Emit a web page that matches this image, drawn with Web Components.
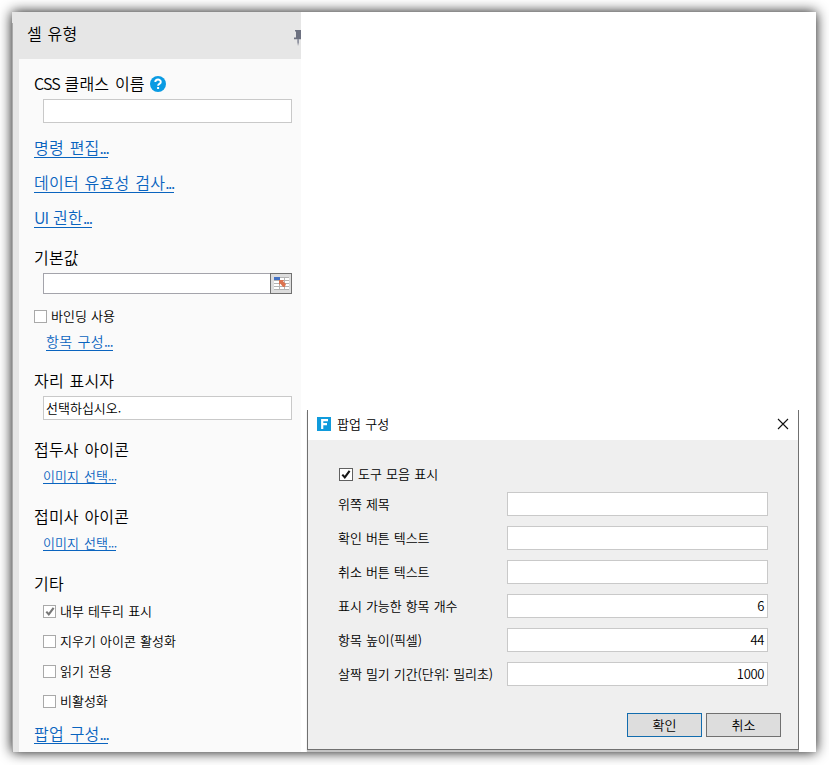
<!DOCTYPE html>
<html lang="ko">
<head>
<meta charset="utf-8">
<title>셀 유형</title>
<style>
html,body{margin:0;background:#fff}
body{font-family:"Noto Sans CJK KR","Liberation Sans",sans-serif;font-weight:350;color:#000;height:765px;overflow:hidden}
</style>
</head>
<body>
<cell-app></cell-app>
<script>
const define = (name, html, init) => customElements.define(name, class extends HTMLElement {
  connectedCallback() {
    if (this.shadowRoot) return;
    const t = document.createElement('template');
    t.innerHTML = html;
    this.attachShadow({mode: 'open'}).append(t.content.cloneNode(true));
    if (init) init(this, this.shadowRoot);
  }
});

define('section-label', `<style>
:host{display:flex;align-items:center;box-sizing:border-box;height:30px;padding:0 0 2px 15px;font-size:16px;line-height:20px;letter-spacing:.2px;word-spacing:1px;white-space:nowrap}
</style><slot></slot>`);

define('help-icon', `<style>:host{display:block;width:16px;height:16px;margin:2px 0 0 5px}svg{display:block}</style>
<svg width="16" height="16" viewBox="0 0 16 16"><circle cx="8" cy="8" r="8" fill="#0a9be3"/><path d="M5.3 6.1C5.3 2.7 10.8 2.8 10.8 5.9C10.8 8 8.1 7.7 8.1 9.7" fill="none" stroke="#fff" stroke-width="1.9"/><rect x="7.1" y="11" width="2" height="2" fill="#fff"/></svg>`);

define('action-link', `<style>
:host{display:flex;align-items:center;height:35px;padding-left:15px;font-size:16px;white-space:nowrap}
:host([size=medium]){height:25px;padding-left:27px;font-size:14px}
:host([size=small]){height:22px;padding-left:24px;font-size:13px}
a{display:block;box-sizing:border-box;height:20px;line-height:19px;border-bottom:1px solid #0a64bf;color:#0a64bf;letter-spacing:.24px;word-spacing:1px}
:host(:not([size])) a{margin-top:-2px}
:host([size=medium]) a{height:18px;line-height:17px;letter-spacing:.3px;margin-top:-2px}
:host([size=small]) a{height:16px;line-height:16px;letter-spacing:.1px}
:host([keep]) a{margin-top:0}
.dots{letter-spacing:-1.4px}
:host([size=medium]) .dots{letter-spacing:-.9px}
:host([size=small]) .dots{letter-spacing:-.7px}
</style><a><slot></slot><span class="dots">...</span></a>`);

define('text-box', `<style>
:host{display:flex;align-items:center;box-sizing:border-box;height:24px;background:#fff;border:1px solid #c9c9c9;padding:0 3px;font-size:13px;line-height:18px;white-space:nowrap}
:host([panel]){margin:0 9px 0 24px;padding-left:2px}
:host([number]){justify-content:flex-end;letter-spacing:-.35px}
</style><slot></slot>`);

define('formula-box', `<style>
:host{display:flex;height:21px;margin:0 9px 0 24px}
.field{flex:1;box-sizing:border-box;background:#fff;border:1px solid #a4a4ab;border-right:0}
.pick{box-sizing:border-box;width:22px;border:1px solid #707070;background:#ddd}
svg{display:block}
</style><div class="field"></div><div class="pick"><svg width="20" height="19" viewBox="0 0 20 19" shape-rendering="crispEdges">
<rect x="3" y="3" width="15" height="13" fill="#b4b4b4"/>
<path fill="#fff" d="M9 4h4v2H9zM14 4h4v2h-4zM3 7h5v2H3zM9 7h4v2H9zM14 7h4v2h-4zM3 10h5v2H3zM9 10h4v2H9zM14 10h4v2h-4zM3 13h5v2H3zM9 13h4v2H9zM14 13h4v2h-4z"/>
<rect x="3" y="3" width="6" height="3" fill="#4472c4"/>
<path d="M8 6h5l-1 1.3 3 2.7-1.3 3H12L9.3 9.5 8 11z" fill="#dc7350" shape-rendering="geometricPrecision"/></svg></div>`);

define('check-item', `<style>
:host{display:flex;align-items:center;height:30px;padding-left:24px;font-size:13px;line-height:18px;letter-spacing:-.02px;word-spacing:.6px;white-space:nowrap}
:host([outer]){height:27px;padding-left:15px}
:host([dialog]){padding-left:0;height:26px}
.box{box-sizing:border-box;width:13px;height:13px;border:1px solid #a9a9a9;background:#fff;margin-right:4px}
.text{margin-top:-1px}
:host([dialog]) .box{width:14px;border-color:#606060;margin-right:5px}
svg{display:none}
:host([checked]) svg{display:block}
path{fill:none;stroke:#777;stroke-width:2.1}
:host([dialog]) path{stroke:#161616}
</style><div class="box"><svg width="12" height="11" viewBox="0 0 12 11"><path d="M2.3 5.6L4.8 8.4L9.6 1.8"/></svg></div><span class="text"><slot></slot></span>`);

define('pin-icon', `<style>:host{display:block;width:7px;height:16px}svg{display:block}</style>
<svg width="7" height="16" viewBox="0 0 7 16"><path d="M1 0h6v1.5H1zM2 1h5v7H2zM0 7.5h7v1.8H0z" fill="#6d7180"/><path d="M3.2 9h1.8v3.5L4 16 3.2 12z" fill="#9093a0"/></svg>`);

define('side-panel', `<style>
:host{display:flex;flex-direction:column;width:289px;height:740px;background:#e6e6e6}
header{display:flex;align-items:center;justify-content:space-between;height:47px;box-sizing:border-box;padding:0 0 5px 15px;font-size:16px;line-height:20px;letter-spacing:.2px;word-spacing:1px}
pin-icon{margin-top:9px}
main{flex:1;box-sizing:border-box;margin-left:7px;padding-top:10px;background:#fafafa}
</style><header><slot name="title"></slot><pin-icon></pin-icon></header><main><slot></slot></main>`);

define('form-row', `<style>
:host{display:grid;grid-template-columns:169px 261px;align-items:center;height:24px;margin:0 0 10px -1px;font-size:13px;line-height:18px;white-space:nowrap}
span{letter-spacing:-.08px;word-spacing:.6px}
</style><span><slot></slot></span><text-box number></text-box>`, (host, root) => {
  root.querySelector('text-box').textContent = host.getAttribute('value') || '';
});

define('push-button', `<style>
:host{display:flex;align-items:center;justify-content:center;box-sizing:border-box;width:75px;height:24px;border:1px solid #707070;background:#ddd;font-size:13px;line-height:18px}
:host([primary]){border-color:#126cae}
</style><slot></slot>`);

define('popup-dialog', `<style>
:host{display:flex;flex-direction:column;box-sizing:border-box;width:492px;height:340px;border:1px solid #707070;border-top:0;background:#efefef;box-shadow:0 2px 1px #c4c4c4}
header{display:flex;align-items:center;height:30px;box-sizing:border-box;padding:0 9px 2px;background:#fff;font-size:13px;line-height:18px;word-spacing:.8px}
header span{flex:1;margin-left:6px}
svg{display:block}
main{flex:1;padding:21px 0 0 31px}
footer{display:flex;justify-content:flex-end;gap:4px;padding:0 17px 12px 0}
</style><header><svg width="14" height="14" viewBox="0 0 14 14"><rect width="14" height="14" fill="#109bdc"/><path d="M5 3.1h6M5 7.2h5M5.2 2v10" stroke="#fff" stroke-width="2.2" fill="none"/></svg><span><slot name="title"></slot></span>
<svg width="12" height="12" viewBox="0 0 12 12"><path d="M1 1L11 11M11 1L1 11" stroke="#111" stroke-width="1.1"/></svg></header>
<main><slot></slot></main><footer><slot name="actions"></slot></footer>`);

define('cell-app', `<style>
:host{display:block;padding:12px}
.frame{position:relative;width:804px;height:740px;background:#fff;box-shadow:0 0 12px rgba(0,0,0,.95)}
.clip{height:740px;overflow:hidden}
.edge{position:absolute;left:0;top:11px;bottom:0;width:1px;background:#aaa}
popup-dialog{position:absolute;left:295px;top:398px;clip-path:inset(0 0 -2px -1px)}
.g8{margin-top:8px}.g7{margin-top:7px}.g9{margin-top:9px}.g15{margin-top:15px}
.l31{height:31px;margin-top:10px}
.etc{height:26px;margin-top:16px;padding-bottom:0}
.last{height:36px}
.latin{letter-spacing:-.85px}
form-row:first-of-type{margin-top:5px}
</style><div class="frame"><div class="clip"><side-panel><span slot="title">셀 유형</span>
<section-label><span><span class="latin">CSS </span>클래스 이름</span><help-icon></help-icon></section-label><text-box panel></text-box>
<action-link class="g8">명령 편집</action-link><action-link>데이터 유효성 검사</action-link><action-link><span class="latin">UI </span>권한</action-link>
<section-label class="g7">기본값</section-label><formula-box></formula-box>
<check-item outer class="g9">바인딩 사용</check-item><action-link size="medium">항목 구성</action-link>
<section-label class="l31">자리 표시자</section-label><text-box panel>선택하십시오.</text-box>
<section-label class="g15">접두사 아이콘</section-label><action-link size="small">이미지 선택</action-link>
<section-label class="g15">접미사 아이콘</section-label><action-link size="small">이미지 선택</action-link>
<section-label class="etc">기타</section-label>
<check-item checked>내부 테두리 표시</check-item><check-item>지우기 아이콘 활성화</check-item><check-item>읽기 전용</check-item><check-item>비활성화</check-item>
<action-link class="last" keep>팝업 구성</action-link></side-panel></div><div class="edge"></div>
<popup-dialog><span slot="title">팝업 구성</span>
<check-item dialog checked>도구 모음 표시</check-item>
<form-row>위쪽 제목</form-row><form-row>확인 버튼 텍스트</form-row><form-row>취소 버튼 텍스트</form-row>
<form-row value="6">표시 가능한 항목 개수</form-row><form-row value="44">항목 높이(픽셀)</form-row><form-row value="1000">살짝 밀기 기간(단위: 밀리초)</form-row>
<push-button slot="actions" primary>확인</push-button><push-button slot="actions">취소</push-button></popup-dialog></div>`);
</script>
</body>
</html>
